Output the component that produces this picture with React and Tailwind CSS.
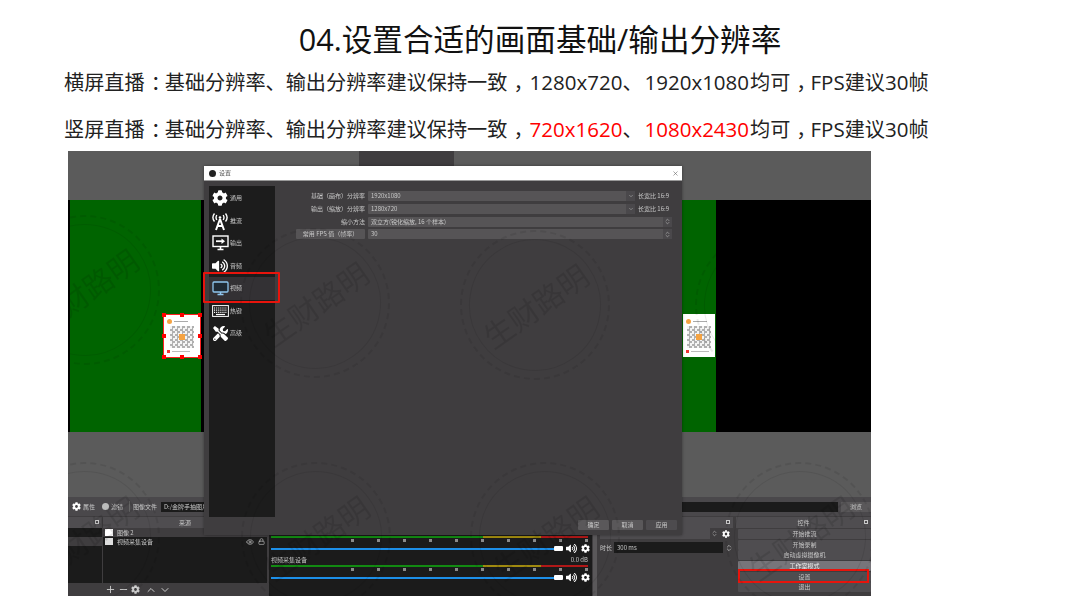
import { ChevronDown, ChevronUp, ChevronsUpDown, Eye, Lock, Minus, Plus, X } from "lucide-react";
import { FaCog, FaTools, FaVolumeUp } from "react-icons/fa";

const cjk = { fontFamily: '"Noto Sans CJK SC", "Liberation Sans", sans-serif' };

// latin runs and centred punctuation in the slide text
function L({ children, className = "" }) {
  return <span className={`font-['Open_Sans'] text-[20.5px] ${className}`}>{children}</span>;
}
function P({ children }) {
  return <span className="relative left-[6px]">{children}</span>;
}

// tiny blurred UI labels
function Tiny({ children, className = "" }) {
  return <span className={`text-[6px] leading-none whitespace-nowrap text-[#c8c8c8] ${className}`}>{children}</span>;
}

function Stamp({ className }) {
  return (
    <div className={`absolute w-[150px] h-[150px] rounded-full border-2 border-dashed border-black/8 flex items-center justify-center -rotate-[35deg] ${className}`}>
      <div className="w-[132px] h-[132px] rounded-full border border-black/8 flex items-center justify-center">
        <span className="text-[30px] text-black/10 whitespace-nowrap">生财路明</span>
      </div>
    </div>
  );
}

function QrCard({ className }) {
  return (
    <div className={`absolute bg-white flex flex-col items-center justify-center gap-[2px] ${className}`}>
      <div className="flex items-center gap-[2px] w-full pl-[3px]">
        <div className="w-[5px] h-[5px] rounded-full bg-[#f5a342]" />
        <div className="w-[14px] h-px bg-[#aaa]" />
      </div>
      <div className="relative w-[24px] h-[22px] bg-[repeating-conic-gradient(#b0b0b0_0_25%,#f4f4f4_0_50%)] bg-[length:5px_5px]">
        <div className="absolute left-[9px] top-[8px] w-[6px] h-[6px] bg-[#f5a342]" />
      </div>
      <div className="flex items-center gap-[2px] w-full pl-[3px]">
        <div className="w-[3px] h-[3px] bg-[#e33]" />
        <div className="w-[18px] h-px bg-[#bbb]" />
      </div>
    </div>
  );
}

function Handle({ className }) {
  return <div className={`absolute w-[4px] h-[4px] bg-[#f00] ${className}`} />;
}

function StreamIcon() {
  return (
    <svg width="18" height="20" viewBox="0 0 18 20" fill="none" stroke="#fff" strokeWidth="1.4">
      <path d="M3.5 2.5C1.5 5 1.5 8 3.5 10.5M14.5 2.5c2 2.5 2 5.5 0 8M5.8 4c-1 1.6-1 3.4 0 5M12.2 4c1 1.6 1 3.4 0 5" />
      <circle cx="9" cy="6.5" r="1.3" fill="#fff" stroke="none" />
      <path d="M9 8 5 19M9 8l4 11M6.5 15h5" strokeWidth="2" />
    </svg>
  );
}

function OutputIcon() {
  return (
    <svg width="17" height="16" viewBox="0 0 17 16" fill="none" stroke="#fff">
      <rect x="1" y="1" width="15" height="10.5" strokeWidth="1.4" />
      <path d="M5.5 14.5h6M8.5 12v2.5" strokeWidth="1.6" />
      <path d="M4 6.2h6.5" strokeWidth="1.8" />
      <path d="M9.5 3.5 13 6.2 9.5 9z" fill="#fff" stroke="none" />
    </svg>
  );
}

function VideoIcon() {
  return (
    <svg width="17" height="15" viewBox="0 0 17 15" fill="none" stroke="#8fc6ee">
      <rect x="1" y="1" width="15" height="10" rx="1" strokeWidth="1.3" fill="#1f2a33" />
      <path d="M5.5 13.5h6M8.5 11v2.5" strokeWidth="1.5" />
    </svg>
  );
}

function KeyboardIcon() {
  return (
    <svg width="17" height="12" viewBox="0 0 17 12" fill="none" stroke="#fff">
      <rect x="0.6" y="0.6" width="15.8" height="10.8" strokeWidth="1" />
      <path d="M2 3h13M2 5.2h13M2 7.4h13" strokeWidth="1.2" strokeDasharray="1 0.9" />
      <path d="M4 9.5h9" strokeWidth="1.2" />
    </svg>
  );
}

function NavItem({ icon, label, active }) {
  return (
    <div className={`h-[22.5px] flex items-center ${active ? "bg-[#333134]" : ""}`}>
      <div className="w-[20px] ml-px flex justify-center">{icon}</div>
      <Tiny>{label}</Tiny>
    </div>
  );
}

function FormRow({ label, value, combo, spin, labelBox }) {
  return (
    <div className="flex items-center h-[10px] mb-[2.8px]">
      <div className="w-[90px] flex justify-end">
        {labelBox ? (
          <div className="h-[10px] w-[69px] bg-[#565456] rounded-[1px] flex items-center justify-center">
            <Tiny>{label}</Tiny>
          </div>
        ) : (
          <Tiny>{label}</Tiny>
        )}
      </div>
      <div className={`ml-[3px] h-[10px] flex items-center pl-[3px] bg-[#565456] rounded-[1px] ${combo ? "w-[267px]" : "w-[304px]"}`}>
        <Tiny className="flex-1">{value}</Tiny>
        {combo && <div className="w-[9px] h-full bg-[#4a484b] flex items-center justify-center"><ChevronDown size={6} color="#bbb" /></div>}
        {spin && <div className="w-[9px] h-full bg-[#4a484b] flex items-center justify-center"><ChevronsUpDown size={7} color="#bbb" /></div>}
      </div>
      {combo && <Tiny className="ml-[3px]">长宽比 16:9</Tiny>}
    </div>
  );
}

function Meter() {
  return (
    <>
      <div className="ml-[2px] h-[2px] w-[317px] flex shrink-0">
        <div className="w-[212px] bg-[#128a12]" />
        <div className="w-[58px] bg-[#a08a10]" />
        <div className="flex-1 bg-[#b01818]" />
      </div>
      <div className="ml-[82px] w-[237px] h-[3px] mt-px flex justify-between shrink-0">
        {[0, 1, 2, 3, 4, 5, 6, 7, 8, 9].map((i) => (
          <div key={i} className="w-[3px] h-[3px] bg-[#8a8a8a]" />
        ))}
      </div>
      <div className="flex items-center h-[11px] pl-[2px] mt-[1px] shrink-0">
        <div className="relative w-[292px] h-[2px] bg-[#1d8fe8]">
          <div className="absolute right-0 -top-[1.5px] w-[9px] h-[5px] rounded-[1px] bg-white" />
        </div>
        <FaVolumeUp size={11} color="#fff" className="ml-[3px]" />
        <FaCog size={9} color="#fff" className="ml-[4px]" />
      </div>
    </>
  );
}

function CtrlButton({ label, light }) {
  return (
    <div className={`h-[10px] shrink-0 rounded-[1px] flex items-center justify-center ${light ? "bg-[#77757a]" : "bg-[#4f4d50]"}`}>
      <Tiny className={light ? "text-[#eee]" : ""}>{label}</Tiny>
    </div>
  );
}

function DockHeader({ children, className = "" }) {
  return (
    <div className={`relative h-[11px] mt-px shrink-0 bg-[#4f4d50] flex items-center justify-center ${className}`}>
      {children}
      <div className="absolute right-[3px] top-[3px] w-[4px] h-[4px] border border-[#ccc]" />
    </div>
  );
}

export default function App() {
  return (
    <div className="w-[1080px] h-[608px] bg-white overflow-hidden text-[#222]" style={cjk}>
      <h1 className="pt-[18px] h-[62px] text-center text-[30.6px] leading-[40px] font-normal whitespace-nowrap text-[#111]">
        <span className="font-['Open_Sans']">04.</span>设置合适的画面基础<span className="font-['Open_Sans']">/</span>输出分辨率
      </h1>
      <p className="pl-[64px] h-[47px] pt-[7px] text-[20.17px] leading-[26px] whitespace-nowrap">
        横屏直播<P>：</P>基础分辨率、输出分辨率建议保持一致<P>，</P><L className="ml-[2px]">1280x720</L>、<L className="ml-[2px] mr-px">1920x1080</L>均可<P>，</P><L>FPS</L>建议<L>30</L>帧
      </p>
      <p className="pl-[64px] h-[42px] pt-[7px] text-[20.17px] leading-[26px] whitespace-nowrap">
        竖屏直播<P>：</P>基础分辨率、输出分辨率建议保持一致<P>，</P><L className="ml-[2px] text-[#ff0000]">720x1620</L>、<L className="ml-[2px] mr-px text-[#ff0000]">1080x2430</L>均可<P>，</P><L>FPS</L>建议<L>30</L>帧
      </p>

      {/* OBS screenshot */}
      <div className="relative ml-[68px] w-[803px] h-[445px] bg-[#5b5b5b] overflow-hidden flex flex-col blur-[0.35px]">
        <div className="h-[49px] shrink-0 pl-[291px]">
          <div className="w-[95px] h-[15px] bg-[#3f3d3f]" />
        </div>

        {/* preview */}
        <div className="h-[232px] bg-black flex pl-[2px] shrink-0">
          <div className="w-[131px] bg-[#006400]" />
          <div className="w-[481px]" />
          <div className="w-[34px] bg-[#006400]" />
        </div>
        <div className="h-[65px] shrink-0" />

        {/* properties toolbar */}
        <div className="h-[19px] shrink-0 flex items-center pl-[4px] bg-[#4a484b]">
          <FaCog size={9} color="#fff" />
          <Tiny className="ml-[2px]">属性</Tiny>
          <div className="w-[7px] h-[7px] rounded-full bg-[#bbb] ml-[7px]" />
          <Tiny className="ml-[2px]">滤镜</Tiny>
          <div className="w-px h-[11px] bg-[#666] ml-[6px]" />
          <Tiny className="ml-[3px]">图像文件</Tiny>
          <div className="h-[10px] w-[681px] ml-[4px] bg-[#1b1b1b] flex items-center pl-[3px]"><Tiny>D:/金牌手抽图片</Tiny></div>
          <div className="h-[10px] w-[30px] ml-[3px] bg-[#5a585a] flex items-center justify-center"><Tiny>浏览</Tiny></div>
        </div>

        {/* docks */}
        <div className="flex-1 min-h-0 flex bg-[#3f3d3f]">
          <div className="w-[34px] flex flex-col">
            <DockHeader />
            <div className="h-[9px] bg-[#1b1b1b]" />
            <div className="h-[9px] bg-[#3f3d3f]" />
            <div className="flex-1 bg-[#1b1b1b]" />
            <div className="h-[13px] bg-[#3f3d3f]" />
          </div>
          <div className="w-[164px] ml-px flex flex-col">
            <DockHeader><Tiny>来源</Tiny></DockHeader>
            <div className="h-[9px] bg-[#3f3d3f] flex items-center gap-[4px] pl-[2px]">
              <div className="w-[8px] h-[7px] bg-white" /><Tiny>图像 2</Tiny>
            </div>
            <div className="h-[9px] bg-[#1b1b1b] flex items-center gap-[4px] pl-[2px] pr-[2px]">
              <div className="w-[8px] h-[7px] bg-[#ddd]" /><Tiny className="flex-1">视频采集设备</Tiny>
              <Eye size={8} color="#ccc" /><Lock size={7} color="#ccc" />
            </div>
            <div className="flex-1 bg-[#1b1b1b]" />
            <div className="h-[13px] flex items-center gap-[2px] pl-[2px] bg-[#3f3d3f]">
              <Plus size={11} color="#ccc" /><Minus size={11} color="#ccc" /><FaCog size={9} color="#ccc" />
              <ChevronUp size={12} color="#ccc" className="ml-[3px]" /><ChevronDown size={12} color="#ccc" />
            </div>
          </div>
          <div className="w-[323px] ml-[2px] flex flex-col bg-[#1b1b1b]">
            <DockHeader />
            <div className="h-[8px] shrink-0" />
            <Meter />
            <div className="h-[11px] shrink-0 flex justify-between items-center px-[2px] pr-[4px]">
              <Tiny className="text-[5px]">视频采集设备</Tiny>
              <Tiny className="text-[5px]">0.0 dB</Tiny>
            </div>
            <Meter />
          </div>
          <div className="w-[4px] mx-px bg-[#5a585a]" />
          <div className="w-[135px] pl-[2px] flex flex-col">
            <DockHeader />
            <div className="h-[11px] flex items-center">
              <div className="w-[110px] h-[11px] bg-[#4f4d50]" />
              <ChevronsUpDown size={7} color="#bbb" className="ml-[1px]" />
              <FaCog size={8} color="#fff" className="ml-[4px]" />
            </div>
            <div className="h-[13px] mt-[2px] flex items-center gap-[2px]">
              <Tiny>时长</Tiny>
              <div className="w-[109px] h-[11px] bg-[#1b1b1b] flex items-center pl-[3px]"><Tiny>300 ms</Tiny></div>
              <ChevronsUpDown size={8} color="#ccc" />
            </div>
          </div>
          <div className="flex-1 ml-[3px] flex flex-col">
            <DockHeader><Tiny>控件</Tiny></DockHeader>
            <div className="flex flex-col gap-[0.7px] pl-[2px] pt-px">
              <CtrlButton label="开始推流" />
              <CtrlButton label="开始录制" />
              <CtrlButton label="启动虚拟摄像机" />
              <CtrlButton label="工作室模式" light />
              <CtrlButton label="设置" />
              <CtrlButton label="退出" />
            </div>
          </div>
        </div>

        {/* sources on the canvas */}
        <QrCard className="left-[96px] top-[164px] w-[36px] h-[42px] outline-1 outline-[#ff2020]" />
        <Handle className="left-[94px] top-[162px]" />
        <Handle className="left-[112px] top-[162px]" />
        <Handle className="left-[130px] top-[162px]" />
        <Handle className="left-[94px] top-[183px]" />
        <Handle className="left-[130px] top-[183px]" />
        <Handle className="left-[94px] top-[204px]" />
        <Handle className="left-[112px] top-[204px]" />
        <Handle className="left-[130px] top-[204px]" />
        <QrCard className="left-[615px] top-[163px] w-[32px] h-[43px]" />

        {/* settings dialog */}
        <div className="absolute left-[136px] top-[15px] w-[478px] h-[369px] bg-[#3f3d3f] flex flex-col shadow-[0_0_3px_rgba(0,0,0,0.4)]">
          <div className="h-[15px] shrink-0 bg-white flex items-center pl-[5px] pr-[3px] border-b border-[#999]">
            <div className="w-[7px] h-[7px] rounded-full bg-[#222] mr-[3px]" />
            <span className="text-[6px] leading-none text-[#555]">设置</span>
            <X size={7} color="#666" className="ml-auto" />
          </div>
          <div className="flex-1 flex pt-[5px] pl-[5px]">
            <div className="w-[66px] h-[331px] bg-[#1c1c1c] pt-px">
              <NavItem icon={<FaCog size={16} color="#fff" />} label="通用" />
              <NavItem icon={<StreamIcon />} label="推流" />
              <NavItem icon={<OutputIcon />} label="输出" />
              <NavItem icon={<FaVolumeUp size={16} color="#fff" />} label="音频" />
              <NavItem icon={<VideoIcon />} label="视频" active />
              <NavItem icon={<KeyboardIcon />} label="热键" />
              <NavItem icon={<FaTools size={15} color="#fff" />} label="高级" />
            </div>
            <div className="pt-[5px]">
              <FormRow label="基础（画布）分辨率" value="1920x1080" combo />
              <FormRow label="输出（缩放）分辨率" value="1280x720" combo />
              <FormRow label="缩小方法" value="双立方(锐化缩放, 16 个样本)" spin />
              <FormRow label="常用 FPS 值（帧率）" value="30" spin labelBox />
            </div>
          </div>
          <div className="h-[18px] shrink-0 flex justify-end gap-[3px] pr-[5px] pt-[3px]">
            <div className="w-[31px] h-[10px] bg-[#5a585a] rounded-[1px] flex items-center justify-center"><Tiny>确定</Tiny></div>
            <div className="w-[31px] h-[10px] bg-[#5a585a] rounded-[1px] flex items-center justify-center"><Tiny>取消</Tiny></div>
            <div className="w-[31px] h-[10px] bg-[#4d4b4e] rounded-[1px] flex items-center justify-center"><Tiny className="text-[#777]">应用</Tiny></div>
          </div>
        </div>

        {/* callouts */}
        <div className="absolute left-[135px] top-[121px] w-[77px] h-[31px] border-2 border-[#e8140c] rounded-[1px]" />
        <div className="absolute left-[670px] top-[418px] w-[131px] h-[14px] border-2 border-[#e8140c]" />

        {/* watermark */}
        <Stamp className="left-[-58px] top-[64px]" />
        <Stamp className="left-[172px] top-[77px]" />
        <Stamp className="left-[392px] top-[79px]" />
        <Stamp className="left-[627px] top-[79px]" />
        <Stamp className="left-[-58px] top-[311px]" />
        <Stamp className="left-[173px] top-[311px]" />
        <Stamp className="left-[402px] top-[311px]" />
        <Stamp className="left-[657px] top-[311px]" />
      </div>
    </div>
  );
}
